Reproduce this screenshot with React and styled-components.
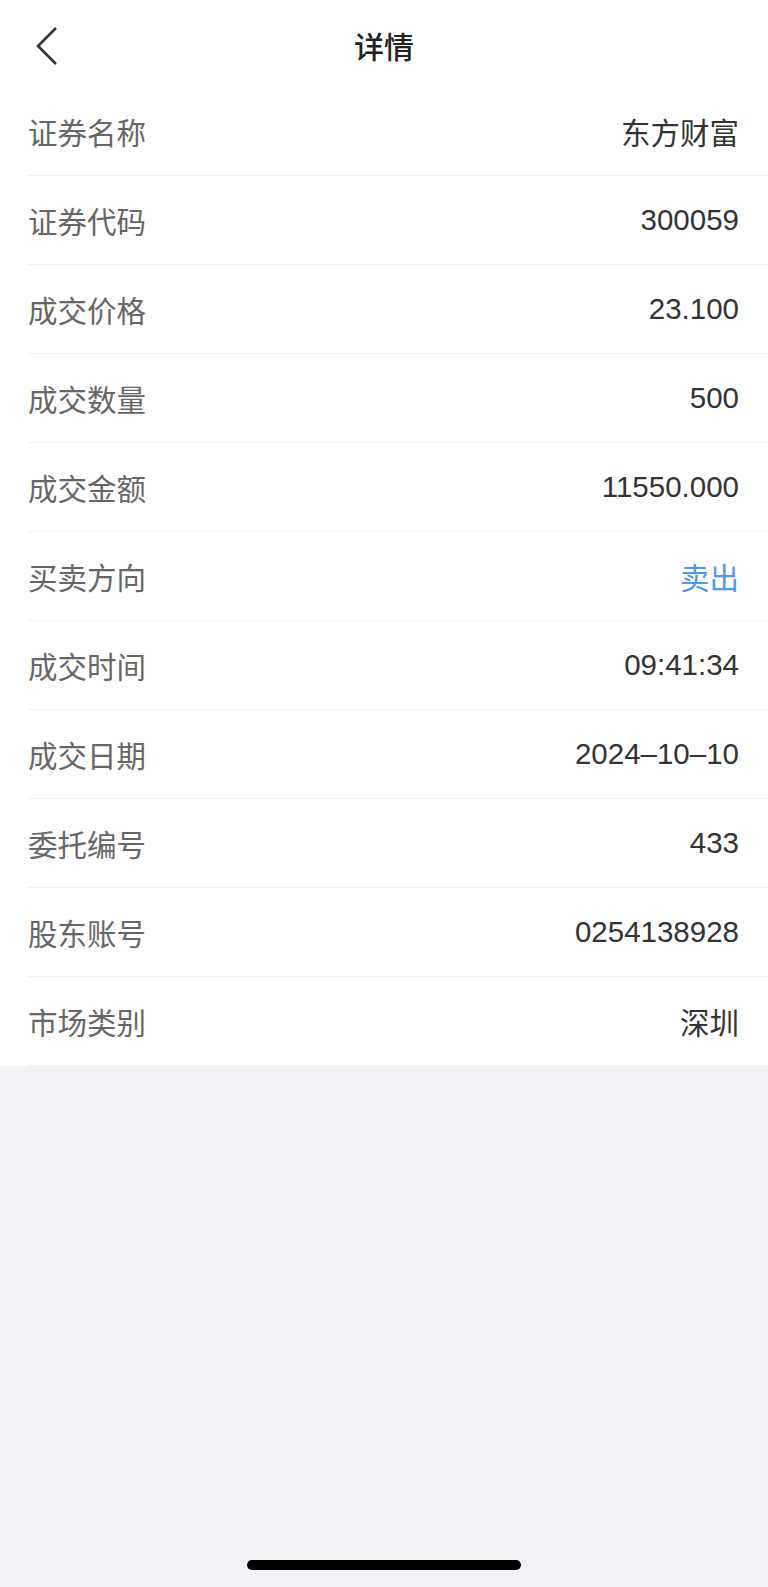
import React from "react"
import styled, { createGlobalStyle } from "styled-components"

const GlobalStyle = createGlobalStyle`
    html, body {
        margin: 0;
        padding: 0;
        background: #f1f2f6;
    }
    body {
        font-family: "Liberation Sans", "Noto Sans CJK SC", sans-serif;
    }
`

const Page = styled.div`
    width: 768px;
    min-height: 1587px;
    background: #f1f2f6;
    display: flex;
    flex-direction: column;
`

const Top = styled.div`
    background: #fff;
`

const Header = styled.div`
    height: 87px;
    display: flex;
    align-items: center;
    justify-content: center;
    position: relative;
`

const Back = styled.div`
    position: absolute;
    left: 33px;
    top: 24px;
    width: 30px;
    height: 44px;
    cursor: pointer;
`

const Title = styled.div`
    font-size: 30px;
    font-weight: 500;
    color: #222;
    font-family: "Noto Sans CJK SC", sans-serif;
    margin-top: 2px;
`

const List = styled.div`
    padding-left: 28px;
`

const Row = styled.div`
    height: 88px;
    display: flex;
    align-items: center;
    justify-content: space-between;
    padding-right: 29px;
    border-bottom: 1px solid #f0f0f0;
    font-size: 29.5px;
    &:last-child {
        border-bottom-color: #f1f2f6;
    }
`

const Label = styled.div`
    color: #666;
    font-family: "Noto Sans CJK SC", sans-serif;
`

const Value = styled.div`
    color: ${(p) => p.color || "#333"};
`

const Spacer = styled.div`
    flex: 1;
`

const HomeBar = styled.div`
    width: 274px;
    height: 10px;
    border-radius: 5px;
    background: #000;
    margin: 0 auto 17px;
`

const rows = [
    { label: "证券名称", value: "东方财富" },
    { label: "证券代码", value: "300059" },
    { label: "成交价格", value: "23.100" },
    { label: "成交数量", value: "500" },
    { label: "成交金额", value: "11550.000" },
    { label: "买卖方向", value: "卖出", color: "#4e96ee" },
    { label: "成交时间", value: "09:41:34" },
    { label: "成交日期", value: "2024–10–10" },
    { label: "委托编号", value: "433" },
    { label: "股东账号", value: "0254138928" },
    { label: "市场类别", value: "深圳" },
]

const App = () => {
    return (
        <Page>
            <GlobalStyle />
            <Top>
                <Header>
                    <Back>
                        <svg width="30" height="44" viewBox="0 0 30 44">
                            <path d="M23 4 L5 22 L23 40" fill="none" stroke="#333" strokeWidth="2.6" />
                        </svg>
                    </Back>
                    <Title>详情</Title>
                </Header>
                <List>
                    {rows.map((r) => (
                        <Row key={r.label}>
                            <Label>{r.label}</Label>
                            <Value color={r.color}>{r.value}</Value>
                        </Row>
                    ))}
                </List>
            </Top>
            <Spacer />
            <HomeBar />
        </Page>
    )
}

export default App
